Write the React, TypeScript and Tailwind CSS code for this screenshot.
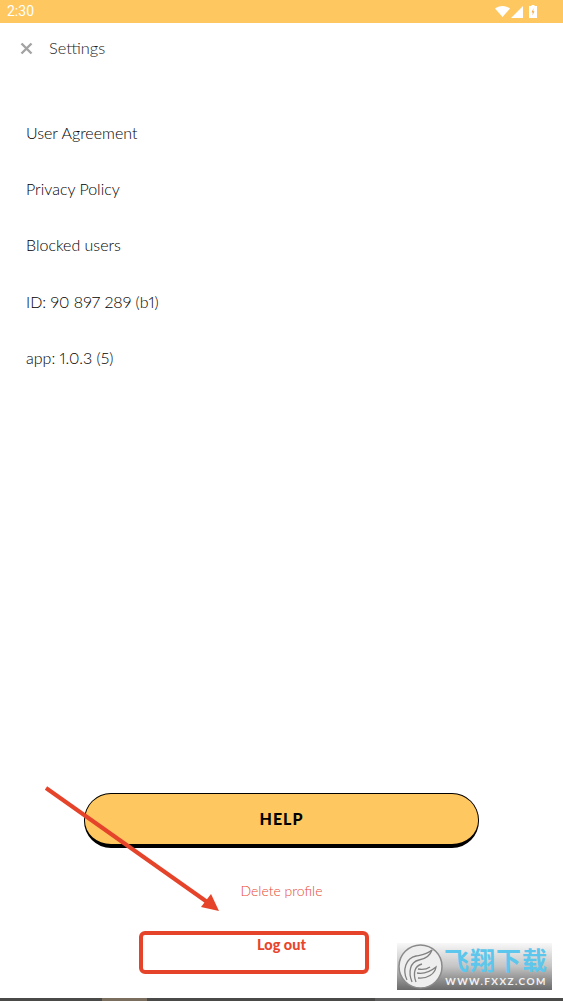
const font = { fontFamily: '"Lato", "Noto Sans CJK SC", sans-serif' }

const rows = ['User Agreement', 'Privacy Policy', 'Blocked users', 'ID: 90 897 289 (b1)', 'app: 1.0.3 (5)']

function StatusBar() {
  return (
    <div className="flex h-[23px] items-center justify-between bg-[#FFC75F] pl-[7px] pr-[26px]">
      <span className="font-['Roboto'] text-[14px] text-white">2:30</span>
      <div className="flex items-center">
        <svg width="15" height="11" viewBox="0 0 15 11" className="mr-[1px]">
          <path d="M0 2.5C2 1 4.6 0 7.5 0S13 1 15 2.5L7.5 11z" fill="#fff" />
        </svg>
        <svg width="12" height="12" viewBox="0 0 12 12" className="mr-[6px]">
          <path d="M12 0v12H0z" fill="#fff" />
        </svg>
        <svg width="8" height="13" viewBox="0 0 8 13">
          <path d="M2.5 0h3v1H8v12H0V1h2.5z" fill="#fff" />
          <path d="M4.6 3 2.6 7.4h1.3L3.4 10.6l2-4.4H4.1z" fill="#F4A63A" />
        </svg>
      </div>
    </div>
  )
}

function Watermark() {
  return (
    <div className="absolute left-[397px] top-[943px] flex h-[47px] w-[155px] items-center bg-gradient-to-b from-[#f8f8f8] via-[#c4c4c4] to-[#6a6a6a]">
      <svg width="47" height="47" viewBox="0 0 47 47" className="shrink-0">
        <circle cx="23.5" cy="23.5" r="21.5" fill="#eeeeee" stroke="#8a8a8a" strokeWidth="1.5" />
        <g fill="none" stroke="#808080" strokeWidth="1.3">
          <path d="M10 37C5 27 9 15 19 13c5-1 10-1 16-6" />
          <path d="M15 39C11 29 13 19 22 17c6-1 11-4 13-10" />
          <path d="M19 39C16 31 17 23 25 21" />
          <path d="M20 30c6 1 13-1 19-6-1 7-9 12-18 11" />
          <path d="M21 26c5 1 9 0 12-2" />
        </g>
      </svg>
      <div className="flex flex-col items-center">
        <span className="text-[25px] font-bold leading-[29px] tracking-[1px] text-[#5cc6ec]">飞翔下载</span>
        <span className="text-[10px] font-bold leading-[12px] tracking-[1.4px] text-[#f2f2f2]">WWW.FXXZ.COM</span>
      </div>
    </div>
  )
}

export default function App() {
  return (
    <div className="relative flex h-[1001px] w-[563px] flex-col overflow-hidden bg-white" style={font}>
      <StatusBar />

      {/* header */}
      <div className="flex h-[51px] items-center pl-[20px]">
        <svg width="13" height="13" viewBox="0 0 13 13">
          <path d="M1.5 1.5l10 10M11.5 1.5l-10 10" stroke="#a3a3a3" strokeWidth="2.4" />
        </svg>
        <span className="ml-[16px] text-[16.4px] font-light text-[#222]">Settings</span>
      </div>

      {/* rows */}
      <div className="mt-[48px] flex flex-col gap-[35.2px] pl-[26px]">
        {rows.map((r) => (
          <div key={r} className="h-[21px] text-[16px] leading-[21px] font-light text-black proportional-nums">
            {r}
          </div>
        ))}
      </div>

      <div className="flex-1" />

      {/* bottom buttons */}
      <div className="flex flex-col items-center">
        <button className="flex h-[55px] w-[395px] items-center justify-center rounded-[27px] border border-b-[4px] border-black bg-[#FFC75F] text-[16px] font-black tracking-[1px] text-black">
          HELP
        </button>
        <div className="mt-[32px] text-[14px] font-light text-[#e8492f]">Delete profile</div>
        <div className="mt-[33px] h-[64px] text-[14.5px] leading-[22px] font-black text-[#e8452c]">Log out</div>
        <div className="flex h-[3px] w-full bg-[#4a4a48]">
          <div className="ml-[102px] w-[45px] bg-[#7a6e5e]" />
          <div className="ml-[228px] w-[45px] bg-[#5f5f5f]" />
        </div>
      </div>

      {/* annotation drawn over the screenshot */}
      <div className="absolute left-[139px] top-[931px] h-[43px] w-[230px] rounded-[6px] border-[4px] border-[#E5432A]" />
      <svg className="absolute left-0 top-0" width="563" height="1001">
        <path d="M46 788 L210 904" stroke="#E5432A" strokeWidth="4" />
        <path d="M219 911 L201 907 L211 894z" fill="#E5432A" />
      </svg>

      <Watermark />
    </div>
  )
}
